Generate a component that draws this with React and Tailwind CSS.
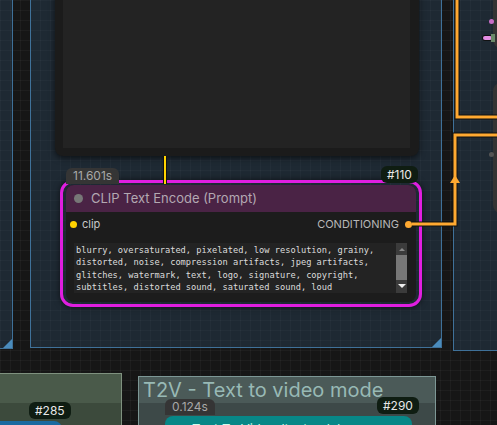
import React from "react";

const grid =
  "bg-[linear-gradient(to_right,rgba(255,255,255,0.035)_1px,transparent_1px),linear-gradient(to_bottom,rgba(255,255,255,0.035)_1px,transparent_1px)] bg-[size:10px_10px]";

const prompt =
  "blurry, oversaturated, pixelated, low resolution, grainy,\ndistorted, noise, compression artifacts, jpeg artifacts,\nglitches, watermark, text, logo, signature, copyright,\nsubtitles, distorted sound, saturated sound, loud";

// blue group frame with its resize corner
const BlueGroup = ({ className }) => (
  <div className={`absolute border border-[#3f7199] bg-[rgba(51,85,119,0.3)] ${className}`}>
    <div className="absolute bottom-0 right-0 h-0 w-0 border-l-[9px] border-t-[9px] border-l-transparent border-t-transparent border-b-[0px] border-r-[9px] border-r-[#4a8cbd]" />
  </div>
);

const Badge = ({ children, className }) => (
  <div
    className={`absolute rounded-md bg-[#0f1d12] px-[6px] text-[12px] leading-[17px] text-[#e8e8e8] ${className}`}
  >
    {children}
  </div>
);

const Timer = ({ children, className }) => (
  <div
    className={`absolute rounded-t-md bg-[#353535] px-[7px] text-[12px] leading-[16px] text-[#a8a8a8] ${className}`}
  >
    {children}
  </div>
);

export default function App() {
  return (
    <div
      className={`relative h-[425px] w-[497px] overflow-hidden bg-[#161616] ${grid}`}
      style={{ fontFamily: "Inter, 'Noto Sans', sans-serif" }}
    >
      {/* groups */}
      <BlueGroup className="left-[-20px] top-[-10px] h-[359px] w-[33px]" />
      <BlueGroup className="left-[30px] top-[-10px] h-[358px] w-[412px]" />
      <div className="absolute left-[453px] top-[-10px] h-[361px] w-[60px] border border-[#3f7199] bg-[rgba(51,85,119,0.3)]" />

      {/* nodes on the right edge */}
      <div className="absolute left-[493px] top-[-10px] h-[58px] w-[20px] rounded-bl-lg bg-[#343434]" />
      <div className="absolute left-[493px] top-[83px] h-[130px] w-[20px] rounded-l-lg bg-[#343434]" />
      <div className="absolute left-[489px] top-[19px] h-[5px] w-[5px] rounded-full bg-[#c86ec8]" />
      <div className="absolute left-[483px] top-[36px] h-[4px] w-[9px] rounded-sm bg-[#e48ee4] shadow-[0_0_0_1px_#111]" />
      <div className="absolute left-[491px] top-[34px] h-[8px] w-[4px] bg-[#6b8a6b]" />
      <div className="absolute left-[489px] top-[152px] h-[5px] w-[5px] rounded-full bg-[#555]" />

      {/* image preview node */}
      <div className="absolute left-[55px] top-[-20px] h-[176px] w-[364px] rounded-lg bg-[#1b1b1b] pl-[8px] shadow-[0_2px_6px_rgba(0,0,0,0.6)]">
        <div className="h-[168px] w-[347px] bg-[#232323]" />
      </div>

      {/* CLIP Text Encode node */}
      <div className="absolute left-[60px] top-[180px] h-[127px] w-[362px] rounded-[13px] border-[3px] border-[#e01ee0] pl-[3px] pr-[3px] pt-[2px] shadow-[0_0_6px_rgba(0,0,0,0.6)]">
        <div className="flex h-[117px] flex-col overflow-hidden rounded-lg bg-[#1c1c1c]">
          <div className="flex h-[27px] items-center gap-[8px] bg-[#4a2345] pl-[8px]">
            <div className="h-[9px] w-[9px] rounded-full bg-[#777]" />
            <span className="text-[13px] text-[#b3a8b2]">CLIP Text Encode (Prompt)</span>
          </div>
          <div className="flex h-[24px] items-center justify-between pl-[4px] pr-[4px] pt-[1px]">
            <div className="flex items-center gap-[5px]">
              <div className="h-[7px] w-[7px] rounded-full bg-[#ffd200]" />
              <span className="text-[11px] text-[#c8c8c8]">clip</span>
            </div>
            <div className="flex items-center gap-[6px]">
              <span className="text-[11px] text-[#b8b8b8]">CONDITIONING</span>
              <div className="h-[7px] w-[7px] rounded-full bg-[#ffa931]" />
            </div>
          </div>
          <div className="ml-[8px] mt-[7px] flex h-[50px] w-[333px] bg-[#232323]">
            <pre
              className="flex-1 overflow-hidden pl-[2px] pt-[1px] text-[8.7px] leading-[12.3px] text-[#dcdcdc]"
              style={{ fontFamily: "'DejaVu Sans Mono', 'Liberation Mono', monospace" }}
            >
              {prompt}
            </pre>
            <div className="flex w-[11px] flex-col items-center bg-[#3b3b3b]">
              <div className="mt-[5px] h-0 w-0 border-x-[3px] border-b-[3px] border-x-transparent border-b-[#888]" />
              <div className="mt-[4px] h-[25px] w-[11px] bg-[#777]" />
              <div className="mt-[4px] h-0 w-0 border-x-[4px] border-t-[4px] border-x-transparent border-t-[#eee]" />
            </div>
          </div>
        </div>
      </div>
      <Timer className="left-[66px] top-[168px]">11.601s</Timer>
      <Badge className="left-[381px] top-[166px]">#110</Badge>

      {/* wires */}
      <svg className="pointer-events-none absolute left-0 top-0" width="497" height="425">
        <g fill="none" strokeLinejoin="miter">
          <path d="M165 156 V184" stroke="#111" strokeWidth="4" />
          <path d="M165 156 V184" stroke="#ffd200" strokeWidth="2" />
          <path d="M412 224 H455 V135 H500" stroke="#111" strokeWidth="5" />
          <path d="M412 224 H455 V135 H500" stroke="#ffa931" strokeWidth="3" />
          <path d="M457 -5 V117 H500" stroke="#111" strokeWidth="5" />
          <path d="M457 -5 V117 H500" stroke="#ffa931" strokeWidth="3" />
        </g>
        <path d="M455 175 L450 183 H460 Z" fill="#ffa931" />
      </svg>

      {/* bottom left group */}
      <div className="absolute left-[-10px] top-[373px] h-[70px] w-[132px] border border-[#7f917f] bg-[#3c4a3c]">
        <div className="h-[29px] bg-[#4a5a4a]" />
      </div>
      <div className="absolute left-[-10px] top-[421px] h-[20px] w-[72px] rounded-tr-lg bg-[#1a6aa0]" />
      <Badge className="left-[29px] top-[402px]">#285</Badge>

      {/* T2V group */}
      <div className="absolute left-[138px] top-[376px] h-[70px] w-[298px] border border-[#7d9795] bg-[#3d4948]">
        <div className="h-[26px] bg-[#4b5a58] pl-[4px] text-[20px] leading-[27px] text-[#98b9b5]">
          T2V - Text to video mode
        </div>
      </div>
      <div className="absolute left-[165px] top-[416px] h-[30px] w-[247px] overflow-hidden rounded-t-lg bg-[#078787]">
        <div className="pl-[27px] pt-[5px] text-[13px] leading-[16px] text-[#cfe]">Text To Video (text only)</div>
      </div>
      <Timer className="left-[165px] top-[399px]">0.124s</Timer>
      <Badge className="left-[377px] top-[397px]">#290</Badge>
    </div>
  );
}
